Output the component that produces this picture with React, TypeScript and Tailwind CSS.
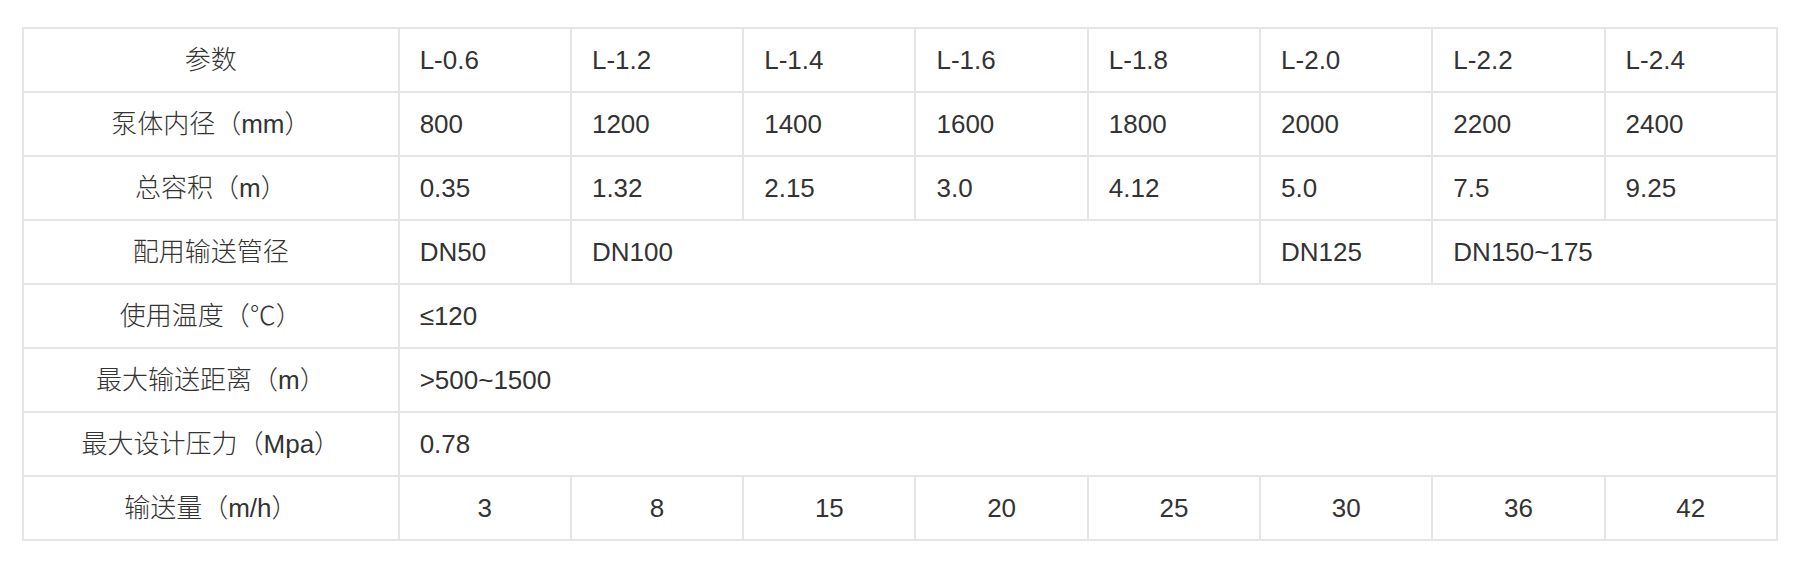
import React from 'react';

const models = ['L-0.6', 'L-1.2', 'L-1.4', 'L-1.6', 'L-1.8', 'L-2.0', 'L-2.2', 'L-2.4'];
const diameters = ['800', '1200', '1400', '1600', '1800', '2000', '2200', '2400'];
const volumes = ['0.35', '1.32', '2.15', '3.0', '4.12', '5.0', '7.5', '9.25'];
const flows = ['3', '8', '15', '20', '25', '30', '36', '42'];

const cell = 'border-2 border-[#e5e5e5] h-[64px] align-middle';
const label = `${cell} text-center font-light`;
const value = `${cell} text-left pl-[20px]`;

const Label = ({ children }: { children: React.ReactNode }) => (
  <td className={label}>{children}</td>
);

export default function App() {
  return (
    <div className="bg-white w-[1798px] h-[566px] pt-[27px] pl-[22px]">
      <table
        className="border-collapse table-fixed w-[1756px] text-[26px] leading-none text-[#333]"
        style={{ fontFamily: '"Liberation Sans", "Noto Sans CJK SC", sans-serif' }}
      >
        <colgroup>
          <col className="w-[375px]" />
          {models.map((m) => (
            <col key={m} className="w-[172px]" />
          ))}
        </colgroup>
        <tbody>
          <tr>
            <Label>参数</Label>
            {models.map((m) => (
              <td key={m} className={value}>{m}</td>
            ))}
          </tr>
          <tr>
            <Label>泵体内径（mm）</Label>
            {diameters.map((d) => (
              <td key={d} className={value}>{d}</td>
            ))}
          </tr>
          <tr>
            <Label>总容积（m）</Label>
            {volumes.map((v) => (
              <td key={v} className={value}>{v}</td>
            ))}
          </tr>
          <tr>
            <Label>配用输送管径</Label>
            <td className={value}>DN50</td>
            <td className={value} colSpan={4}>DN100</td>
            <td className={value}>DN125</td>
            <td className={value} colSpan={2}>DN150~175</td>
          </tr>
          <tr>
            <Label>使用温度（℃）</Label>
            <td className={value} colSpan={8}>≤120</td>
          </tr>
          <tr>
            <Label>最大输送距离（m）</Label>
            <td className={value} colSpan={8}>&gt;500~1500</td>
          </tr>
          <tr>
            <Label>最大设计压力（Mpa）</Label>
            <td className={value} colSpan={8}>0.78</td>
          </tr>
          <tr>
            <Label>输送量（m/h）</Label>
            {flows.map((f) => (
              <td key={f} className={`${cell} text-center`}>{f}</td>
            ))}
          </tr>
        </tbody>
      </table>
    </div>
  );
}
